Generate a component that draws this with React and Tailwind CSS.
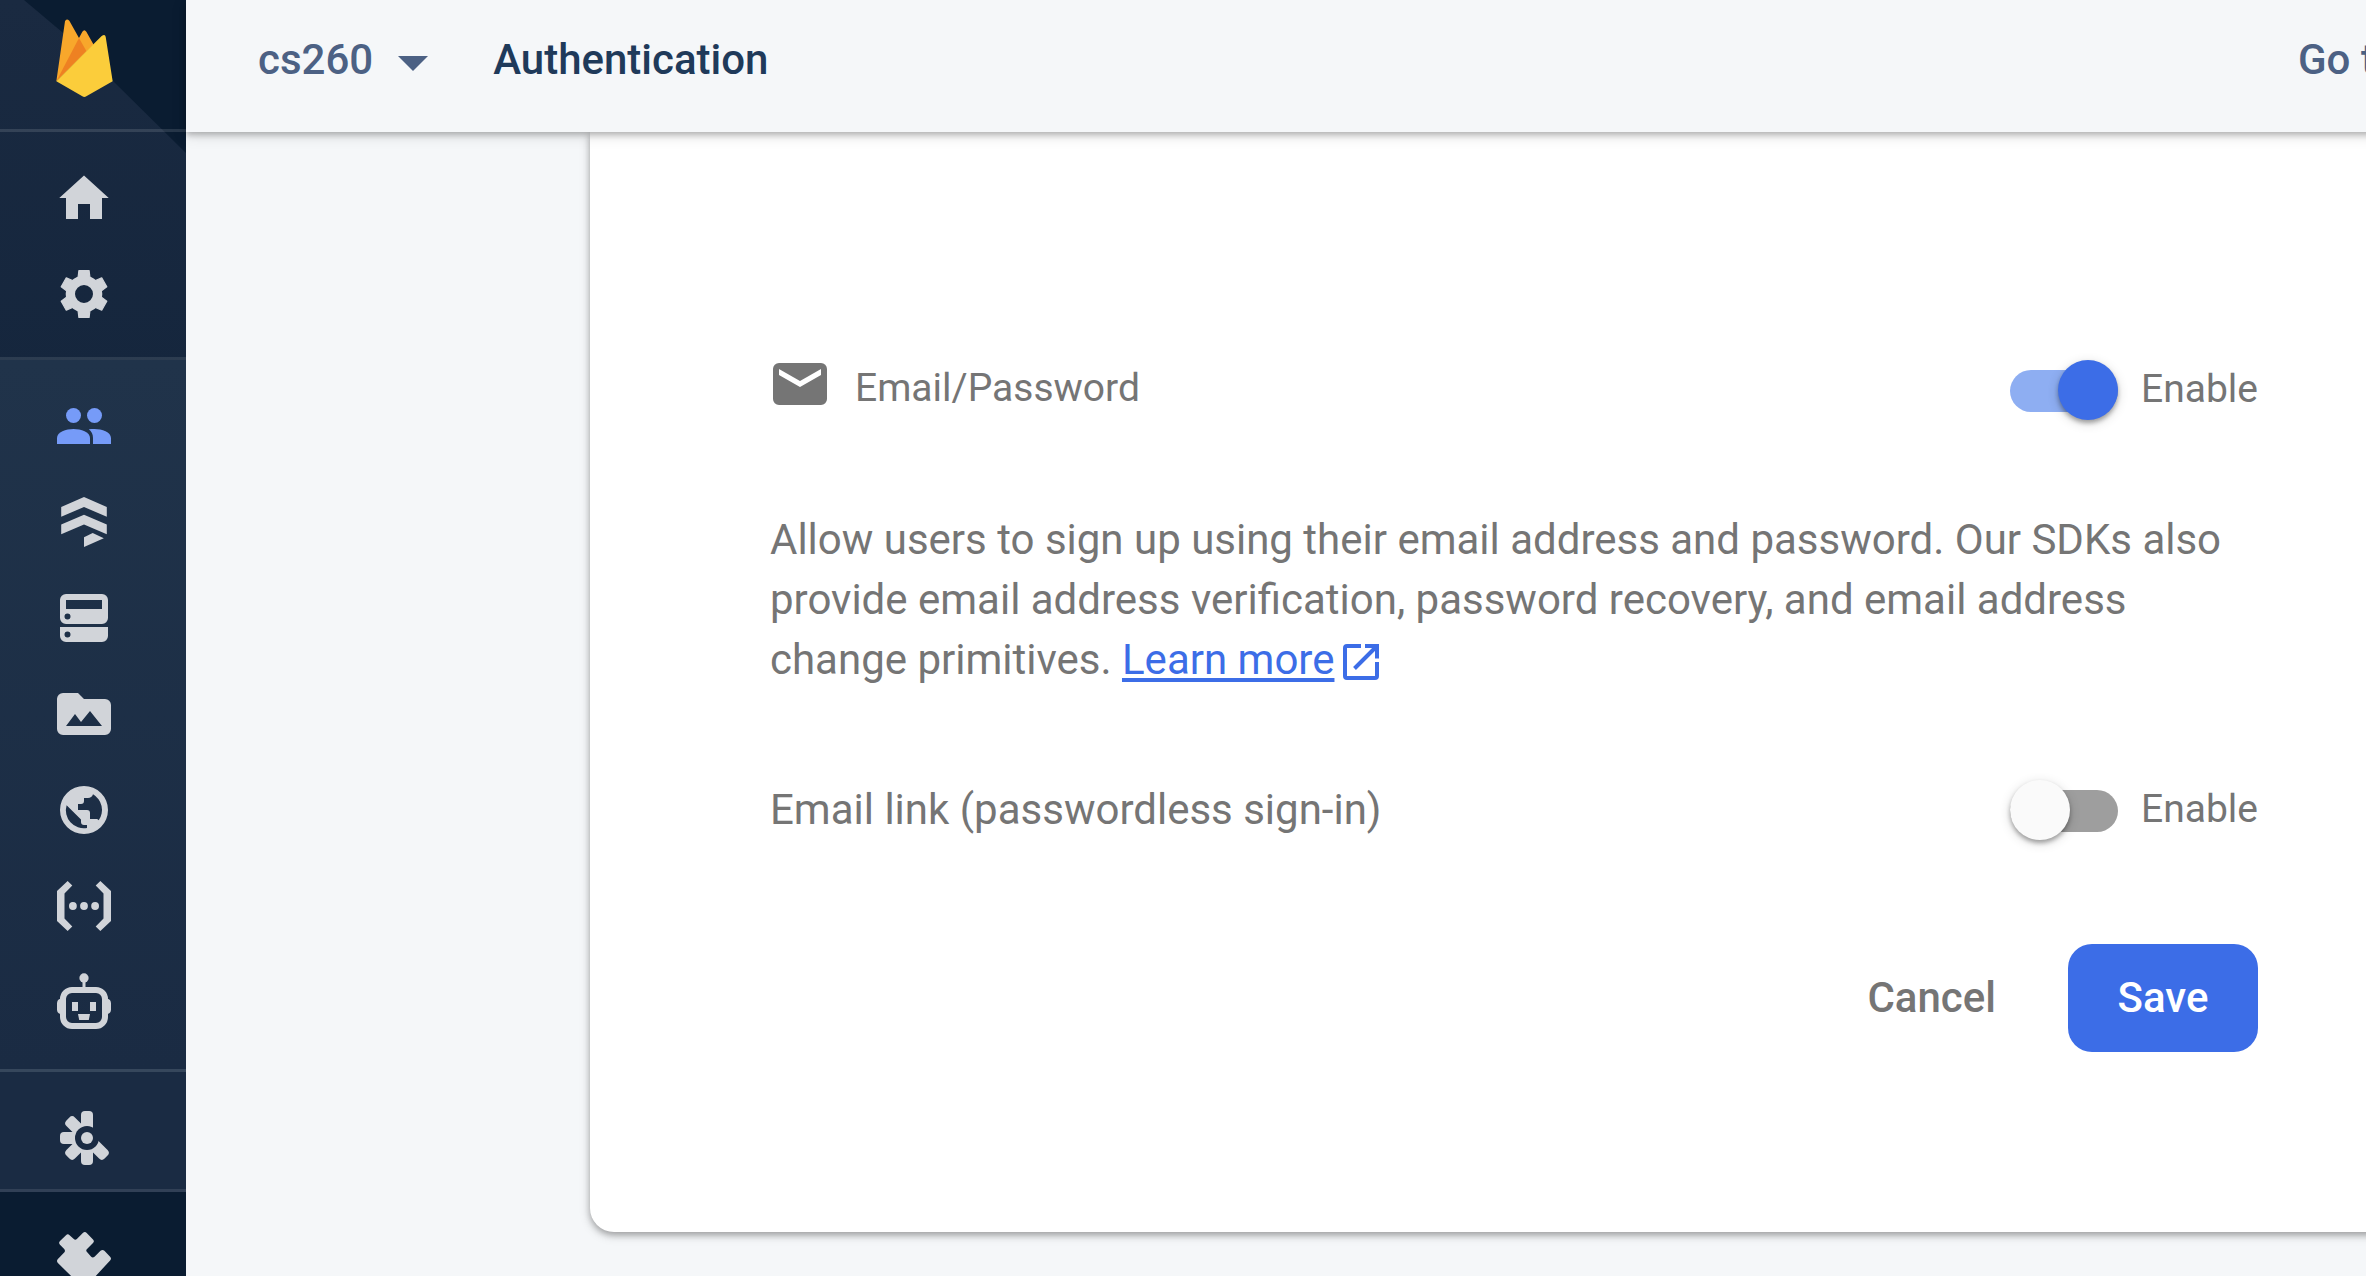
import React from "react";

function Icon({ children, className = "" }) {
  return (
    <svg
      viewBox="0 0 18 18"
      fill="currentColor"
      fillRule="evenodd"
      aria-hidden="true"
      className={`size-[54px] shrink-0 overflow-visible ${className}`}
    >
      {children}
    </svg>
  );
}

const HomeIcon = () => (
  <Icon>
    <path d="M9 1.5 17.25 9H15v7h-4v-5H7v5H3V9H.75z" />
  </Icon>
);

const GEAR_TOOTH = "M7.3 1.2h3.4l.4 3.3H6.9z";
const SettingsIcon = () => (
  <Icon>
    <circle cx="9" cy="9" r="4.55" fill="none" stroke="currentColor" strokeWidth="3.1" />
    {[0, 60, 120, 180, 240, 300].map((a) => (
      <path
        key={a}
        d={GEAR_TOOTH}
        transform={`rotate(${a} 9 9)`}
        stroke="currentColor"
        strokeWidth=".4"
        strokeLinejoin="round"
      />
    ))}
  </Icon>
);

const PeopleIcon = () => (
  <Icon>
    <circle cx="5.5" cy="5.5" r="2.5" />
    <circle cx="12.5" cy="5.5" r="2.5" />
    <path d="M0 15v-2c0-2 3-3 5.5-3s5.5 1 5.5 3v2z" />
    <path d="M12 15v-2c0-1.200-.5-2.200-1.400-2.900.6-.1 1.200-.1 1.900-.1C15 10 18 11 18 13v2z" />
  </Icon>
);

const FirestoreIcon = () => (
  <Icon>
    <path d="M9 .65 16.600 4v3.250L9 4 1.400 7.250V4z" />
    <path d="M9 6.550 16.600 9.850v3.250L9 9.800 1.400 13.100V9.850z" />
    <path d="M9 14.100 11.900 12.700 15.600 14.400 9 17.300z" />
  </Icon>
);

const DatabaseIcon = () => (
  <Icon>
    <path d="M3 1h12a2 2 0 0 1 2 2v6a2 2 0 0 1-2 2H3a2 2 0 0 1-2-2V3a2 2 0 0 1 2-2zM3 3v3h12V3zM3.500 7.500a1 1 0 1 0 0 2 1 1 0 0 0 0-2z" />
    <path d="M1 12h16v3a2 2 0 0 1-2 2H3a2 2 0 0 1-2-2zM3.500 13.500a1 1 0 1 0 0 2 1 1 0 0 0 0-2z" />
  </Icon>
);

const StorageIcon = () => (
  <Icon>
    <path d="M2 2h5l2 2h7a2 2 0 0 1 2 2v8a2 2 0 0 1-2 2H2a2 2 0 0 1-2-2V4a2 2 0 0 1 2-2zM3 13h12L11 8l-3 3.700L6 9z" />
  </Icon>
);

const HostingIcon = () => (
  <Icon>
    <path d="M9 1a8 8 0 1 1 0 16A8 8 0 0 1 9 1zM12 3.750c-.3.850-.8 1.250-1.700 1.250H9v1a1 1 0 0 1-1 1H7v2h3a1 1 0 0 1 1 1v2h2c.4 0 .7.1.9.4A6 6 0 0 0 12 3.750zM3.200 7.400A6 6 0 0 0 10 15v-1H9c-.6 0-1-.4-1-1v-.8z" />
  </Icon>
);

const FunctionsIcon = () => (
  <Icon>
    <path d="M3.550.7 5.100 2.200 2.500 4.800v8.400l2.600 2.600-1.550 1.500L0 14V4z" />
    <path d="M14.450.7 12.900 2.200l2.600 2.600v8.400l-2.600 2.600 1.550 1.500L18 14V4z" />
    <circle cx="5.300" cy="9" r="1.300" />
    <circle cx="9" cy="9" r="1.300" />
    <circle cx="12.700" cy="9" r="1.300" />
  </Icon>
);

const RobotIcon = () => (
  <Icon>
    <circle cx="9" cy="1" r="1.550" />
    <path d="M8.500 2h1v2.500h-1z" />
    <path d="M5 4h8a4 4 0 0 1 4 4v6a4 4 0 0 1-4 4H5a4 4 0 0 1-4-4V8a4 4 0 0 1 4-4zm0 2a2 2 0 0 0-2 2v6a2 2 0 0 0 2 2h8a2 2 0 0 0 2-2V8a2 2 0 0 0-2-2z" />
    <path d="M1.200 7.900v5.100Q0 12.800 0 11.500V9.500Q0 8.100 1.200 7.900zM16.800 7.900v5.100q1.200-.2 1.200-1.500V9.500q0-1.400-1.200-1.600z" />
    <path d="M5 9h2v3H5zM11 9h2v3h-2zM7 13h4l-.4 2H7.400z" />
  </Icon>
);

const MachineLearningIcon = () => (
  <Icon>
    <mask id="ml-hub" maskUnits="userSpaceOnUse" x="-2" y="-2" width="24" height="24">
      <rect x="-2" y="-2" width="24" height="24" fill="#fff" />
      <circle cx="10" cy="9" r="4" fill="#000" />
    </mask>
    <g mask="url(#ml-hub)">
      {[0, 135, 180, 225, 270, 315].map((a) => (
        <rect key={a} x="8" y="0" width="4" height="7" rx="1.300" transform={`rotate(${a} 10 9)`} />
      ))}
    </g>
    <circle cx="10" cy="9" r="2" />
  </Icon>
);

const ExtensionsIcon = () => (
  <Icon>
    <path d="M.3 10.700Q-.3 10 .3 9.300L2.400 7.200Q2.900 6.600 2.400 6L1 4.600Q.4 3.900 1 3.300L3 1.400Q3.600.8 4.200 1.400L5.600 2.700Q6.100 3.200 6.700 2.600L8.600.7Q9.300 0 9.900.7L12 2.800Q12.600 3.500 12 4L10 6Q9.500 6.500 10 7L11.400 8.600Q11.900 9.100 12.500 8.600L14.500 6.600Q15.200 6 15.800 6.600L17.700 8.600Q18.300 9.200 17.700 9.800L9.700 18.500Q9 19.200 8.300 18.500Z" />
  </Icon>
);

const MailIcon = () => (
  <Icon className="text-[#757575]">
    <path d="M2 2h14a2 2 0 0 1 2 2v10a2 2 0 0 1-2 2H2a2 2 0 0 1-2-2V4a2 2 0 0 1 2-2zM2 4v2l7 4 7-4V4L9 8z" />
  </Icon>
);

const FirebaseLogo = () => (
  <svg viewBox="167 56 171 237" className="h-[79px] w-[57px]" aria-hidden="true">
    <path fill="#f8a72b" d="M168 243 194 63Q198 53 207 61L236 113 246 94Q252 85 258 94L280 133z" />
    <path fill="#ee8122" d="M168 243 236 113 258 152z" />
    <path
      fill="#fbcd3b"
      d="M168 243 304 107Q314 100 316 109L337 243 258 288Q252 292 246 288z"
    />
  </svg>
);

const OpenInNewIcon = () => (
  <svg
    viewBox="0 0 36 36"
    fill="none"
    stroke="currentColor"
    strokeWidth="4"
    aria-hidden="true"
    className="ml-[9px] inline-block size-9 align-[-6px]"
  >
    <path d="M18 2H4Q2 2 2 4V32Q2 34 4 34H32Q34 34 34 32V18" />
    <path d="M22 2H34V14.500M11.500 24.500 34 2" />
  </svg>
);

const NAV_GROUPS = [
  {
    className: "pb-[15px] border-b-3",
    items: [
      ["Project overview", HomeIcon],
      ["Project settings", SettingsIcon],
    ],
  },
  {
    className: "pb-[19px] border-b-3 bg-linear-to-b from-[#20334a] to-[#1a2b43]",
    items: [
      ["Authentication", PeopleIcon],
      ["Firestore Database", FirestoreIcon],
      ["Realtime Database", DatabaseIcon],
      ["Storage", StorageIcon],
      ["Hosting", HostingIcon],
      ["Functions", FunctionsIcon],
      ["Machine Learning", RobotIcon],
    ],
  },
  {
    className: "pb-[3px] border-b-3 bg-[#1a2b43]",
    items: [["Release and monitor", MachineLearningIcon]],
  },
  {
    className: "grow bg-[#0a1c31]",
    items: [["Extensions", ExtensionsIcon]],
  },
];

function Sidebar() {
  return (
    <aside className="relative flex w-[186px] shrink-0 flex-col bg-linear-to-b from-[#1a2a41] to-[#15263d] to-30% text-[#d1d4d9]">
      <svg viewBox="0 0 186 153" className="absolute top-0 left-0 w-full" aria-hidden="true">
        <path d="M24 0 62 32 113 81 186 153V0z" fill="#0a1c31" />
      </svg>
      <a
        href="#"
        aria-label="Firebase"
        className="relative flex h-[132px] shrink-0 justify-center border-b-3 border-white/12 pt-[19px] pr-[18px]"
      >
        <FirebaseLogo />
      </a>
      <nav className="relative flex grow flex-col">
        {NAV_GROUPS.map((group, i) => (
          <div key={i} className={`border-white/10 pt-[18px] ${group.className}`}>
            {group.items.map(([label, Glyph]) => (
              <a
                key={label}
                href="#"
                aria-label={label}
                aria-current={label === "Authentication" ? "page" : undefined}
                className="flex h-24 items-center justify-center pr-[18px] aria-[current=page]:text-[#769bf8]"
              >
                <Glyph />
              </a>
            ))}
          </div>
        ))}
      </nav>
    </aside>
  );
}

function Header() {
  return (
    <header className="relative z-10 -mr-6 flex h-[132px] items-center bg-[#f5f7f9] pr-6 pb-3 pl-[72px] text-[42px] leading-[60px] font-medium text-[#4c6184] shadow-[0_3px_6px_rgba(0,0,0,0.24),0_3px_15px_rgba(0,0,0,0.12)]">
      <button type="button" className="flex shrink-0 items-center gap-[25px]">
        cs260
        <svg viewBox="0 0 30 15" className="mt-[6px] w-[30px]" aria-hidden="true">
          <path d="M0 0h30L15 15z" fill="currentColor" />
        </svg>
      </button>
      <h1 className="ml-[65px] text-[#1f3a5a]">Authentication</h1>
      <a href="#" className="ml-auto w-[68px] whitespace-nowrap">
        Go to docs
      </a>
    </header>
  );
}

function Switch({ name, defaultChecked }) {
  return (
    <label className="flex shrink-0 items-end gap-[23px] text-[39px] leading-[62px]">
      <input
        type="checkbox"
        role="switch"
        name={name}
        defaultChecked={defaultChecked}
        className="relative mb-2 h-[42px] w-[108px] appearance-none rounded-full bg-[#9e9e9e] before:absolute before:-top-[10px] before:left-0 before:size-[60px] before:rounded-full before:bg-[#fafafa] before:shadow-[0_3px_4px_rgba(0,0,0,0.3),0_3px_12px_rgba(0,0,0,0.16)] checked:bg-[#8eaef2] checked:before:left-12 checked:before:bg-[#3c6de7]"
      />
      Enable
    </label>
  );
}

export default function App() {
  return (
    <div className="flex h-screen overflow-hidden bg-[#f5f7f9] font-[Roboto,sans-serif]">
      <Sidebar />
      <div className="flex min-w-0 grow flex-col">
        <Header />
        <main className="-mr-6 pl-[404px]">
          <form
            onSubmit={(e) => e.preventDefault()}
            className="rounded-bl-3xl bg-white pt-[225px] pr-[132px] pb-[180px] pl-[180px] text-[42px] leading-[60px] text-[#757575] shadow-[0_3px_6px_rgba(0,0,0,0.26),0_3px_12px_rgba(0,0,0,0.16)]"
          >
            <div className="flex items-end justify-between">
              <h2 className="flex items-start gap-7 pl-[3px] text-[39px] leading-[63px]">
                <MailIcon />
                Email/Password
              </h2>
              <Switch name="emailPassword" defaultChecked />
            </div>
            <p className="mt-[90px]">
              Allow users to sign up using their email address and password. Our SDKs also provide
              email address verification, password recovery, and email address change primitives.{" "}
              <a
                href="#"
                className="whitespace-nowrap text-[#3c6de7] underline decoration-4 underline-offset-4"
              >
                Learn more
                <OpenInNewIcon />
              </a>
            </p>
            <div className="mt-[88px] flex items-end justify-between">
              <h2>Email link (passwordless sign-in)</h2>
              <Switch name="emailLink" />
            </div>
            <div className="mt-[104px] flex justify-end gap-6 font-medium">
              <button type="button" className="h-[108px] px-12">
                Cancel
              </button>
              <button
                type="submit"
                className="h-[108px] min-w-[190px] rounded-3xl bg-[#3c6de7] px-12 text-white"
              >
                Save
              </button>
            </div>
          </form>
        </main>
      </div>
    </div>
  );
}
